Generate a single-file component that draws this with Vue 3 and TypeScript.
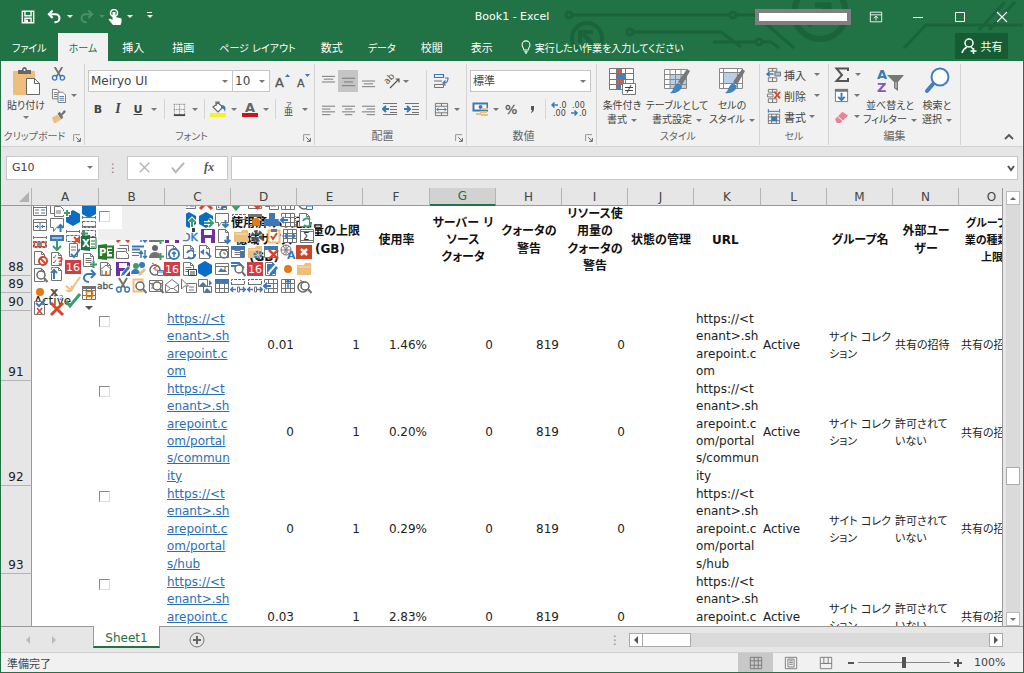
<script setup lang="ts">
import { ref } from 'vue'

interface Tab { label: string; active?: boolean; kana?: boolean }
interface Row { no: number; size: string; cells: Record<string, string>; box?: boolean }

const stroke = (d: string, c = '#737373', w = 1): string =>
  `<path d="${d}" fill="none" stroke="${c}" stroke-width="${w}"/>`
const fill = (d: string, c: string): string => `<path d="${d}" fill="${c}"/>`
const word = (t: string, x: number, y: number, size: number, c: string, extra = ''): string =>
  `<text x="${x}" y="${y}" font-size="${size}" fill="${c}" ${extra}>${t}</text>`

const gray = '#737373'
const blue = '#3b78b8'
const tan = '#ecc07c'
const red = '#d9442a'
const green = '#3f9b6c'

const doc = fill('M2.5 1.5h7l3 3v10h-10z', '#fff') + stroke('M2.5 1.5h7l3 3v10h-10zM9.500 1.500v3h3')
const sheetBox = fill('M1.500 2.500h13v11h-13z', '#fff') + stroke('M1.500 2.500h13v11h-13zM1.500 5.500h13')
const table = fill('M1.500 1.500h13v13h-13z', '#fff') + stroke('M1.500 1.500h13v13h-13zM1.500 5.500h13M1.500 10.500h13M5.500 1.500v13M10.500 1.500v13')
const lines = stroke('M4.500 6.500h6M4.500 8.500h6M4.500 10.500h6')
const lens = '<circle cx="9" cy="8" r="4" fill="#fff" stroke="#666" stroke-width="1.500"/>' + stroke('M12 11l3.500 4', gray, 2)
const cross = stroke('M9 9l6 6M15 9l-6 6', red, 2)
const cross2 = stroke('M2 2l12 12M14 2L2 14', red, 3)
const hex = fill('M8 0l7 4v8l-7 4-7-4V4z', '#0a6cc4')
const plus = stroke('M12.500 9v7M9 12.500h7', green, 2)
const upArrow = stroke('M11.500 15V8M8.500 11l3-3 3 3', blue, 2)
const downArrow = stroke('M11.500 8v7M8.500 12l3 3 3-3', blue, 2)
const pencil = fill('M7 12l6-7 2 2-6 7-3 1z', blue)
const folder = fill('M1 4h7l1-2h6v12H1z', tan) + stroke('M2 6h12', '#f8e2bd')
const refresh = stroke('M6 9a4 4 0 0 1 7-1M14 10a4 4 0 0 1-7 3', blue, 2)
const brush = fill('M24 2l3 2-8 14-4-3z', '#777') + fill('M15 16l4 3c-1 5-6 8-12 7 4-2 3-8 8-10z', '#3f86c0')
const comment = fill('M1.500 1.500h13v9h-7l-3 4v-4h-3z', '#fff') + stroke('M1.500 1.500h13v9h-7l-3 4v-4h-3z')
const save = fill('M1 1h13l1 1v13H1z', '#7030a0') + fill('M4 2h8v5H4zM5 10h6v5H5z', '#fff')
const dashed = stroke('M1.500 2v3M1.500 3.500h13M14.500 2v3', gray) + '<path d="M1.500 7.500h13v6h-13z" fill="none" stroke="#666" stroke-dasharray="3 1"/>'
const redSixteen = fill('M0 1h16v14H0z', '#cf3d45') + word('16', 1, 12, 11, '#fff')
const people = '<circle cx="7" cy="4" r="3" fill="#666"/>' + fill('M1 14c0-8 12-8 12 0z', gray)
const clock = '<circle cx="7" cy="9" r="5" fill="#fff" stroke="#666" stroke-width="1.500"/>' + stroke('M7 6v3h3M4 2l5 3-4 3', red)

const icons: Record<string, string> = {
  save: stroke('M1.500 1.500h13v13h-13zM4.500 1.500v5h7v-5M4.500 14.500v-5h7v5', '#fff', 1.600) + fill('M5 11h3v3H5z', '#fff'),
  undo: stroke('M6 1.500L2 5.500l4 4M2 5.500h7a4 4 0 0 1 0 8.500H8', '#fff', 2.200),
  redo: stroke('M10 1.500l4 4-4 4M14 5.500H7a4 4 0 0 0 0 8.500h1', '#4b9069', 2.200),
  touch: '<circle cx="7" cy="4" r="3.500" fill="none" stroke="#fff" stroke-width="1.500"/>' + fill('M5.500 3h3v5l6 1.500v4l-1 2.500H6L1.500 10.500l1.500-1 2.500 1.500z', '#fff'),
  ribbonopts: stroke('M1.500 2.500h13v11h-13zM1.500 5.500h13M8 12V7M5.500 9.500L8 7l2.500 2.500', '#fff'),
  min: stroke('M3 8.500h10', '#fff'),
  max: stroke('M3.500 3.500h9v9h-9z', '#fff'),
  close: stroke('M3 3l10 10M13 3L3 13', '#fff', 1.200),
  bulb: stroke('M5.500 11.500c0-3-2-3-2-6a4.500 4.500 0 0 1 9 0c0 3-2 3-2 6zM6 13.500h4M7 15h2', '#fff', 1.200),
  share: '<circle cx="8" cy="5" r="4" fill="none" stroke="#fff" stroke-width="1.500"/>' + stroke('M1 15c1-4 3-5 5-6M10 9l2 2M12.500 10v6M9.500 13h6', '#fff', 1.500),
  cut: stroke('M4 0l6 10M12 0L6 10', gray, 2) + stroke('M6 10a2.500 2.500 0 1 0 0 3zM10 10a2.500 2.500 0 1 1 0 3z', blue, 1.500),
  copy: fill('M1.500 1.500h6v10h-6z', '#fff') + stroke('M1.500 1.500h5l2 2v8h-7zM3 5h4M3 7h4M3 9h4') + fill('M7.500 4.500h5l3 3v8h-8z', '#fff') + stroke('M7.500 4.500h5l3 3v8h-8z') + stroke('M9 9h5M9 11h5M9 13h5', blue),
  painter: fill('M1 9l6-3 4 5-6 4H3z', tan) + fill('M7 5l2-2 2 2 3-4 2 2-4 4 1 2-2 2z', gray),
  growA: word('A', 0, 14, 13, '#555', 'stroke="#555" stroke-width=".300"') + fill('M10 4l2.500-3L15 4z', blue),
  shrinkA: word('A', 2, 14, 11, '#555', 'stroke="#555" stroke-width=".300"') + fill('M10 1h5l-2.500 3z', blue),
  border: '<path d="M2.500 2v11M2 2.500h12M13.500 2v11M8 2v11M2 8h12" fill="none" stroke="#777" stroke-dasharray="1 1"/>' + stroke('M2 14h12', '#444', 2),
  bucket: fill('M3 6l5-4 5 4-5 5z', '#fff') + stroke('M3 6l5-4 5 4-5 5zM6 5V1h3v3', '#666', 1.200) + fill('M11 4c5 0 5 3 4 7-1-3-2-4-4-4z', blue) + fill('M0 12h16v4H0z', '#f8f125'),
  fontcolor: word('A', 3, 11, 13, '#666', 'font-weight="bold"') + fill('M0 12h16v4H0z', '#c8161d'),
  ruby: word('ア', 5, 6, 6, '#444') + word('亜', 3, 14, 9, '#444'),
  top: stroke('M1 2.500h14M3 5.500h10M1 8.500h14'),
  mid: stroke('M1 4.500h14M3 8.500h10M1 12.500h14'),
  bottom: stroke('M1 7.500h14M3 10.500h10M1 13.500h14'),
  left: stroke('M1 4.500h14M1 7.500h9M1 10.500h14M1 13.500h9'),
  center: stroke('M1 4.500h14M4 7.500h8M1 10.500h14M4 13.500h8'),
  right: stroke('M1 4.500h14M6 7.500h9M1 10.500h14M6 13.500h9'),
  orient: '<g transform="rotate(-45 6 6)">' + word('ab', 0, 8, 9, '#555') + '</g>' + stroke('M6 15l9-9M11.500 6H15v3.500', '#555', 1.200),
  outdent: stroke('M1 2.500h14M8 5.500h7M8 8.500h7M8 11.500h7M1 13.500h14') + stroke('M7 8H1M4 5L1 8l3 3', blue, 2),
  indent: stroke('M1 2.500h14M8 5.500h7M8 8.500h7M8 11.500h7M1 13.500h14') + stroke('M0 8h6M3 5l3 3-3 3', blue, 2),
  wrap: stroke('M1.500 1.500h9v3h-9zM1.500 11.500h9v3h-9zM1 8h8') + stroke('M1.500 1.500h9v3h-9zM12 5h3c0 4-1 5-4 5M12.500 7.500L10 10l2.500 2.500', blue, 1.200),
  merge: stroke('M1.500 1.500h13v13h-13zM1.500 4.500h13M1.500 11.500h13M8 1.500v3M8 11.500v3') + stroke('M3 8h10M5 6L3 8l2 2M11 6l2 2-2 2', blue),
  money: fill('M1 2h15v7H1z', '#fff') + stroke('M1.500 2.500h14v7h-14z', blue, 2) + '<circle cx="8.500" cy="6" r="2" fill="#3b78b8"/>' + fill('M9 7h7v2H9zM8 10h7v2H8zM4 12h5v2H4zM9 13h7v2H9z', tan),
  percent: word('%', 1, 13, 13, '#555', 'stroke="#555" stroke-width=".300"'),
  comma: fill('M7 5h3v3c0 2-1 3-3 4v-1c1-.500 1-1 1-2H7z', '#555'),
  decplus: stroke('M7 4H1M3.500 1.500L1 4l2.500 2.500', blue, 1.500) + word('.0', 8, 7, 8, '#444') + word('.00', 2, 15, 8, '#444'),
  decminus: word('.00', 1, 7, 8, '#444') + word('.0', 8, 15, 8, '#444') + stroke('M0 12h6M3.500 9.500L6 12l-2.500 2.500', blue, 1.500),
  insert: stroke('M2.500 1.500h9v3h-9zM7 1.500v3M2.500 11.500h9v4h-9zM7 11.500v4') + fill('M9 5h7v5H9z', '#a9c4df') + stroke('M9.500 5.500h6v4h-6z', gray) + stroke('M8 7.500H1M4 5L1 7.500 4 10', blue, 1.500),
  remove: stroke('M2.500 1.500h9v3h-9zM7 1.500v3M2.500 11.500h9v4h-9zM7 11.500v4M1.500 6.500h6v3h-6z') + stroke('M9 4l6 7M15 4l-6 7', red, 2),
  format: stroke('M2.500 5.500h12v10h-12zM2.500 8.500h12M2.500 12.500h12M6 5.500v10M11 5.500v10') + fill('M6 8h6v5H6z', blue) + stroke('M2 2.500h12M2.500 0v4M14.500 0v4', blue),
  sigma: stroke('M14 4V1.500H2.500L8 8l-5.500 6H14v-3', '#555', 2),
  fillDown: fill('M1.500 1.500h13v13h-13z', '#fff') + stroke('M1.500 1.500h13v13h-13z') + fill('M1 1h14v3H1z', '#777') + stroke('M8 5v8M4.500 9.500L8 13l3.500-3.500', blue, 2),
  eraser: fill('M1 11l8-8 6 4-8 8H3z', '#e8849a') + stroke('M4 8l6 5', '#fff'),
  fx: word('fx', 1, 12, 13, '#555', 'font-family="Liberation Serif, serif" font-style="italic" font-weight="bold"'),
  cancel: stroke('M3 3l10 10M13 3L3 13', '#b5b5b5', 1.500),
  check: stroke('M2 8l4 5 9-10', '#b5b5b5', 2),
  launcher: stroke('M5 3.500H3.500V12M5 3.500h7', '#777') + stroke('M7 7l5 5M12.500 8v4.500H8', '#555', 1.200),
  caret: stroke('M4 10l4-4 4 4', '#555', 1.800),
  normal: stroke('M1.500 1.500h13v13h-13zM1.500 5.500h13M1.500 10.500h13M6 1.500v13M10.500 1.500v13'),
  pageview: stroke('M1.500 1.500h13v13h-13zM4.500 3.500h7v9h-7zM6 5.500h4M6 7.500h4M6 9.500h4'),
  breakview: stroke('M1.500 1.500h13v13h-13zM5.500 1.500v7h5v-7M1.500 8.500h13', gray),
  add: '<circle cx="8" cy="8" r="7" fill="none" stroke="#777"/>' + stroke('M8 4v8M4 8h8', '#666', 2),

  form: sheetBox + stroke('M3 8h4M3 11h4') + stroke('M9 8h4M9 11h4', blue),
  docs: stroke('M1.500 1.500h7v10h-7z') + fill('M5.500 4.500h9v10h-9z', '#fff') + stroke('M5.500 4.500h6l3 3v7h-9zM7 9h5M7 11h5'),
  split: sheetBox + stroke('M8 5v9') + stroke('M3 9.500h4M9 9.500h4M5.500 8v3M10.500 8v3', blue),
  boxred: dashed + stroke('M2.500 8.500h11v4h-11z', red) + fill('M5 8h5v4H5z', '#7a8ca0'),
  docno: doc + '<circle cx="11" cy="11" r="4" fill="#fff" stroke="#d9442a" stroke-width="2"/>' + stroke('M8 8l6 6', red, 2),
  docfind: doc + lens,
  dot: '<circle cx="8" cy="8" r="4" fill="#e27b10"/>',
  docx: doc + stroke('M5 8l5 6M10 8l-5 6', red, 1.500) + stroke('M4 3l3 3 6-6', blue, 2),
  commentup: comment + upArrow,
  commentdown: comment + downArrow,
  bar: fill('M1 5h14v6H1z', blue) + stroke('M3 8h10', '#fff'),
  greendown: stroke('M8 1v11M4 8l4 4 4-4', green, 2),
  checklist: doc + stroke('M4 6l1 1 2-3M4 11l1 1 2-3', gray) + word('?', 8, 14, 11, red, 'font-weight="bold"'),
  docup: doc + stroke('M5 13V4M2 7l3-3 3 3', '#fff', 4) + stroke('M5 13V4M2 7l3-3 3 3', blue, 2),
  docdown: doc + downArrow,
  xtwo: word('x', 1, 11, 13, '#555', 'font-weight="bold"') + word('2', 10, 15, 7, blue),
  bigx: cross2,
  hexplus: hex + stroke('M2 0v7M-2 3h8', '#fff', 4) + stroke('M2 0v6M-1 3h6', green, 2),
  hex,
  hexarrow: hex + stroke('M6 11h9M11 7l4 4-4 4', '#fff', 4) + stroke('M6 11h9M11 7l4 4-4 4', green, 2),
  hexup: hex + stroke('M11 15V7M8 10l3-3 3 3', '#fff', 4) + stroke('M11 15V7M8 10l3-3 3 3', green, 2),
  dashx: dashed + cross,
  dashed,
  dashplus: dashed + stroke('M3 7v7M0 10.500h7', green, 2),
  server: fill('M4.500 1.500h8v13h-8z', '#fff') + stroke('M4.500 1.500h8v13h-8zM6 5h5M6 8h5') + stroke('M6 12l3 3 6-8', blue, 2),
  sixteen: redSixteen,
  gold: stroke('M1 10l5 4L15 1M1 14c5 3 8-1 5-4', tan, 2),
  okgreen: stroke('M1 9l4 5L15 2', green, 3),
  excel: fill('M0 1l9-1v16l-9-1z', '#1e7145') + fill('M9 2h6v12H9z', '#fff') + stroke('M9 2.500h6v11H9M10 6h4M10 9h4M10 12h4', '#1e7145') + word('X', 1, 12, 10, '#fff', 'font-weight="bold"'),
  project: fill('M0 1l9-1v16l-9-1z', '#2a7a2a') + fill('M9 2h6v12H9z', '#fff') + stroke('M9 2.500h6v11H9M10 6h4M11 9h3', '#2a7a2a', 2) + word('P', 1, 12, 10, '#fff', 'font-weight="bold"'),
  docplus: doc + lines + plus,
  redoBlue: stroke('M10 2l4 4-4 4M14 6H7a4 4 0 0 0-4 4c0 2 2 4 5 4', blue, 2),
  calendar: table + fill('M1 1h14v3H1z', gray) + stroke('M5.500 6.500h6v5h-6z', '#e27b10', 1.500),
  down: fill('M4 6h8l-4 4z', '#555'),
  stack: stroke('M4.500 1.500h9v6M2.500 4.500h9v6') + fill('M1.500 7.500h12v7h-12z', '#fff') + stroke('M1.500 7.500h9l3 3v4h-12z'),
  sort: stroke('M1 2.500h12M1 5.500h8', blue, 2) + stroke('M1 8.500h7M1 11.500h7') + stroke('M10 14V8M8 10l2-3 2 3M14 6v8M12 12l2 2 2-2', blue, 1.500),
  userplus: people + plus,
  users: '<circle cx="5" cy="5" r="3" fill="#3f9b6c"/><circle cx="11" cy="4" r="3" fill="#3b78b8"/>' + fill('M0 13c0-7 9-6 9 0z', blue) + stroke('M8 14l6-6', tan, 3),
  docblueup: doc + '<circle cx="10" cy="10" r="5" fill="#fff" stroke="#3b78b8" stroke-width="2"/>' + stroke('M10 13V8M8 10l2-2 2 2', blue, 1.500),
  docrefresh: doc + refresh,
  greenrefresh: doc + stroke('M6 9a4 4 0 0 1 7-1M14 10a4 4 0 0 1-7 3', green, 2),
  docpart: doc + fill('M3 8l4-3v6z', blue) + stroke('M9 8l5 5', blue, 2),
  winclock: sheetBox + '<circle cx="10" cy="10" r="4" fill="#fff" stroke="#666" stroke-width="1.500"/>' + stroke('M10 8v2h2'),
  winblue: sheetBox + fill('M1 2h14v3H1zM10 7h4v6h-4z', blue) + lines,
  folder,
  foldergear: folder + '<circle cx="11" cy="11" r="3" fill="none" stroke="#3b78b8" stroke-width="3" stroke-dasharray="2 1"/>',
  winx: sheetBox + fill('M1 2h14v3H1z', blue) + stroke('M6 6l9 9M15 6l-9 9', red, 2.500),
  globe: '<circle cx="6" cy="6" r="5" fill="none" stroke="#777"/>' + stroke('M1 6h10M6 1v10M3 2c3 3 3 5 0 8M9 2c-3 3-3 5 0 8', '#777') + word('A', 7, 15, 11, blue, 'font-weight="bold"'),
  redbox: fill('M0 1h16v14H0z', '#ce4427') + stroke('M5 5l6 6M11 5l-6 6', '#fff', 2.500),
  home: doc + stroke('M2 9l6-5 6 5M4 9v5h8V9') + fill('M7 10h2v4H7z', '#e27b10'),
  savepencil: save + stroke('M8 14l7-8', '#fff', 5) + pencil,
  purple: save,
  clock: clock + fill('M9 9h7v6H9z', '#fff') + stroke('M9.500 9.500h6v5h-6zM9 11h6', blue),
  doclist: doc + lines + fill('M7 8h9v7H7z', '#fff') + stroke('M7.500 8.500h8v6h-8zM9 11h5M9 13h5', '#345'),
  picture: sheetBox + fill('M4 11l3-4 2 2 2-1 2 3z', blue) + '<circle cx="11" cy="7" r="1" fill="#e27b10"/>',
  bluefind: stroke('M1 2h8l5 5M1 5h6', blue, 2) + lens,
  docpencil: doc + fill('M4 3h8v10H4z', blue) + stroke('M6 13l8-9', '#fff', 4) + pencil,
  abc: word('abc', -1, 11, 9, '#555', 'stroke="#555" stroke-width=".300"'),
  tanfind: stroke('M2.500 1.500h9v12h-9z', tan, 2) + lens,
  tablefind: sheetBox + stroke('M3 7h4M3 10h3') + lens,
  mail: fill('M1.500 6.500l6.500-5 6.500 5v8h-13z', '#fff') + stroke('M1.500 6.500l6.500-5 6.500 5v8h-13zM1.500 6.500l5 4h3l5-4M1.500 14.500l5-4M14.500 14.500l-5-4'),
  cursor: fill('M5.500 5.500h10v9h-10z', '#fff') + stroke('M5.500 5.500h10v9h-10zM8 9h5M8 12h5') + fill('M0 0l8 8H4l-3 3z', '#fff') + stroke('M.500 1l7 7h-4l-3 3z'),
  swap: fill('M1 1h9v8H1zM6 8h9v7H6z', '#fff') + stroke('M1.500 1.500h9v7h-9zM6.500 8.500h8v6h-8z') + fill('M2 8l4-4 4 4zM7 14l3-4 4 4zM12 2l3 3-3 3z', blue),
  tableblue: table + fill('M1 1h14v4H1z', blue),
  arrows: '<path d="M1.500 7V1.500h13V7" fill="#fff" stroke="#666" stroke-dasharray="3 1"/>' + stroke('M1.500 6.500h13') + stroke('M0 11.500h6M3 9l-2 2.500L3 14M10 11.500h6M13 9l2 2.500L13 14', blue, 1.500) + stroke('M7.500 9v5h2V9z'),
  tableleft: table + stroke('M8 8H1M4 5L1 8l3 3', '#fff', 4) + stroke('M8 8H1M4 5L1 8l3 3', blue, 2),
  tableup: table + stroke('M8 10V2M5.500 4.500L8 2l2.500 2.500', blue, 1.500),
  tablewide: table + stroke('M3 8h10M5 6L3 8l2 2M11 6l2 2-2 2', blue, 1.500),
  clockfind: clock + lens,
  dk: word('DK', -1, 13, 11, blue, 'stroke="#3b78b8" stroke-width=".400"') + fill('M9 0h3v4H9z', '#345'),
  gear: '<circle cx="8" cy="8" r="4" fill="none" stroke="#555" stroke-width="4" stroke-dasharray="3 1"/>',
  clip: fill('M2 2h12v13H2z', '#fff') + stroke('M2.500 2.500h11v12h-11z', tan, 2) + fill('M5 1h6v3H5z', gray) + stroke('M5 8l2 3 4-6', red, 2),
  total: fill('M0 0h16v16H0z', '#fff') + stroke('M1.500 1.500h13v13h-13zM1 3.500h14M1 12.500h14') + word('Σ', 4, 12, 10, '#333'),
  winorange: stroke('M1.500 2.500h13v11h-13z') + fill('M1 2h14v3H1z', gray) + '<circle cx="9" cy="10" r="4" fill="#e27b10"/>',
  puzzle: fill('M5 1h6v6h5v7H0V7h5z', blue),
  shield: sheetBox + fill('M6 4h9v6l-4.500 5L6 10z', '#d9442a'),
  openframe: '<path d="M1.500 8V2.500h13V8" fill="none" stroke="#666" stroke-dasharray="3 1"/>' + stroke('M1.500 7.500h13'),
}

const tabs: Tab[] = [
  { label: 'ファイル', kana: true }, { label: 'ホーム', kana: true, active: true }, { label: '挿入' }, { label: '描画' },
  { label: 'ページ レイアウト', kana: true }, { label: '数式' }, { label: 'データ', kana: true }, { label: '校閲' }, { label: '表示' },
]

/* Pasted pictures: name, left and top inside the sheet */
const column = (x: number, items: [string, number][]): [string, number, number][] =>
  items.map(([name, y]) => [name, x, y])
const line = (y: number, x: number, names: string[]): [string, number, number][] =>
  names.map((name, i) => [name, x + Math.round(i * 16.5), y])

const pictures: [string, number, number][] = [
  ...column(0, [['form', -4], ['split', 11], ['boxred', 28], ['docno', 44], ['docfind', 61], ['dot', 78], ['docx', 94]]),
  ...column(17, [['docs', -4], ['commentup', 11], ['bar', 24], ['greendown', 32], ['checklist', 45], ['docup', 60], ['xtwo', 79], ['bigx', 95]]),
  ...column(33, [['hexplus', 4], ['dashx', 22], ['server', 36], ['sixteen', 53], ['gold', 70], ['okgreen', 86]]),
  ...column(49, [['hex', -4], ['dashed', 8], ['dashplus', 17], ['excel', 29], ['docplus', 46], ['redoBlue', 62], ['calendar', 79], ['down', 94]]),
  ...line(22, 66, ['bar', 'bigx', 'sort', 'userplus', 'purple']),
  ...line(38, 66, ['project', 'stack', 'sort', 'userplus', 'docblueup', 'docrefresh', 'docpart', 'winclock', 'winblue', 'foldergear', 'winx', 'globe', 'redbox']),
  ...line(55, 66, ['home', 'savepencil', 'users', 'clock', 'sixteen', 'doclist', 'hex', 'picture', 'bluefind', 'sixteen', 'docpencil', 'dot', 'folder']),
  ...line(72, 66, ['abc', 'cut', 'tanfind', 'tablefind', 'mail', 'cursor', 'swap', 'tableblue', 'arrows', 'arrows', 'tableleft', 'tableup', 'clockfind']),
  ...line(-11, 149, ['form', 'bigx', 'docpencil', 'okgreen', 'shield', 'docs', 'tableup', 'clock']),
  ...line(6, 149, ['hexup', 'hexarrow', 'commentdown', 'openframe', 'winorange', 'puzzle', 'tableleft', 'greenrefresh']),
  ...line(22, 151, ['dk', 'purple', 'docdown', 'folder', 'gear', 'clip', 'tablewide', 'total']),
]

const letters = 'ABCDEFGHIJKLMNO'.split('')
const site = (tail: string): string => 'https://<t\nenant>.sh\narepoint.c\nom' + tail
const record = (no: number, size: string, tail: string, used: string, rate: string, outside: string): Row => ({
  no, size, box: true,
  cells: {
    C: site(tail), D: used, E: '1', F: rate, G: '0', H: '819', I: '0', K: site(tail),
    L: 'Active', M: 'サイト コレク\nション', N: outside, O: '共有の招待',
  },
})
const rows: Row[] = [
  {
    no: 88, size: 'r-head', cells: {
      D: '使用済みの記\n憶域サイズ\n(GB)', E: '容量の上限\n(GB)', F: '使用率', G: 'サーバー リ\nソース\nクォータ',
      H: 'クォータの\n警告', I: 'リソース使\n用量の\nクォータの\n警告', J: '状態の管理', K: 'URL',
      M: 'グループ名', N: '外部ユー\nザー', O: 'グループ作\n業の種類の\n上限',
    },
  },
  { no: 89, size: 'r-thin', cells: {} },
  { no: 90, size: 'r-one', cells: { A: 'Active' } },
  record(91, 'r-four', '', '0.01', '1.46%', '共有の招待'),
  record(92, 'r-six', '/portal\ns/commun\nity', '0', '0.20%', '許可されて\nいない'),
  record(93, 'r-five', '/portal\ns/hub', '0', '0.29%', '許可されて\nいない'),
  record(94, 'r-five', '/portal\ns/search', '0.03', '2.83%', '許可されて\nいない'),
]

const font = ref('Meiryo UI')
const fontSize = ref('10')
const numberFormat = ref('標準')
const cellName = ref('G10')
const formula = ref('')
const zoom = ref(100)
</script>

<template>
  <div class="window">
    <header class="top">
      <svg class="circuit" width="470" height="50" viewBox="0 0 470 50" fill="none" stroke="#1b633b" stroke-width="3" aria-hidden="true">
        <circle cx="16" cy="15" r="3" /><path d="M20 15h156M184 15h20" /><circle cx="180" cy="15" r="3" />
        <circle cx="34" cy="38" r="15" stroke-width="4" /><path d="M42 46L29 33M27 43V32h13" stroke-width="4" />
        <circle cx="77" cy="32" r="3" /><path d="M81 32h87l20 15M160 42h42M210 42h8l8 6" /><circle cx="206" cy="42" r="3" />
        <path d="M211 22l30 26M351 48l22-23h97M426 30l26-28M436 30l26-28" />
        <circle cx="267" cy="13" r="26" stroke-width="6" /><path d="M255 26l18-18M262 5h14v14" stroke-width="5" />
      </svg>
      <div class="title-row">
        <div class="quick">
          <button class="q-save" aria-label="上書き保存"><svg class="ic14" viewBox="0 0 16 16" v-html="icons.save" /></button>
          <button class="q-undo" aria-label="元に戻す"><svg class="ic15" viewBox="0 0 16 16" v-html="icons.undo" /><i class="arr light" /></button>
          <button class="q-undo" aria-label="やり直し"><svg class="ic15" viewBox="0 0 16 16" v-html="icons.redo" /><i class="arr faint" /></button>
          <button class="q-touch" aria-label="タッチ"><svg class="ic16" viewBox="0 0 16 16" v-html="icons.touch" /><i class="arr light" /></button>
          <button class="q-more" aria-label="カスタマイズ"><i class="arr light lined" /></button>
        </div>
        <h1>Book1 - Excel</h1>
        <div class="win-controls">
          <span class="account" />
          <button aria-label="リボンの表示"><svg class="ic14" viewBox="0 0 16 16" v-html="icons.ribbonopts" /></button>
          <button aria-label="最小化"><svg class="ic16" viewBox="0 0 16 16" v-html="icons.min" /></button>
          <button aria-label="最大化"><svg class="ic16" viewBox="0 0 16 16" v-html="icons.max" /></button>
          <button aria-label="閉じる"><svg class="ic16" viewBox="0 0 16 16" v-html="icons.close" /></button>
        </div>
      </div>
      <nav class="tabs">
        <button v-for="t in tabs" :key="t.label" class="tab" :class="{ on: t.active, narrow: t.kana }">{{ t.label }}</button>
        <button class="tell"><svg class="ic14" viewBox="0 0 16 16" v-html="icons.bulb" />実行したい作業を入力してください</button>
        <button class="share"><svg class="ic16" viewBox="0 0 16 16" v-html="icons.share" />共有</button>
      </nav>
    </header>

    <section class="ribbon">
      <div class="group g-clip">
        <div class="body">
          <button class="big w50">
            <svg class="ic28" viewBox="0 0 28 28">
              <path d="M1 4h22v24H1z" fill="#ecc07c" /><path d="M6 3h4c0-4 5-4 5 0h4v4H6z" fill="#666" /><circle cx="12.500" cy="3" r="1" fill="#fff" />
              <path d="M14.500 11.500h8l5 5v11h-13z" fill="#fff" stroke="#666" /><path d="M22.500 11.500v5h5" fill="none" stroke="#666" />
            </svg>
            <span>貼り付け</span><i class="arr" />
          </button>
          <div class="stack">
            <button aria-label="切り取り"><svg class="ic15" viewBox="0 0 16 16" v-html="icons.cut" /></button>
            <button aria-label="コピー"><svg class="ic15" viewBox="0 0 16 16" v-html="icons.copy" /><i class="arr push" /></button>
            <button aria-label="書式のコピー"><svg class="ic15" viewBox="0 0 16 16" v-html="icons.painter" /></button>
          </div>
        </div>
        <footer>クリップボード<button class="launch" aria-label="クリップボードの詳細"><svg class="ic12" viewBox="0 0 16 16" v-html="icons.launcher" /></button></footer>
      </div>

      <div class="group g-font">
        <div class="rows">
          <div class="row">
            <span class="combo c-font"><select v-model="font" aria-label="フォント"><option>Meiryo UI</option></select><i class="arr" /></span>
            <span class="combo c-size"><select v-model="fontSize" aria-label="フォント サイズ"><option>10</option></select><i class="arr" /></span>
            <button class="w20" aria-label="拡大"><svg class="ic16" viewBox="0 0 16 16" v-html="icons.growA" /></button>
            <button class="w20" aria-label="縮小"><svg class="ic16" viewBox="0 0 16 16" v-html="icons.shrinkA" /></button>
          </div>
          <div class="row">
            <button class="w20 letter bold">B</button><button class="w20 letter ital">I</button><button class="w20 letter under">U</button>
            <button class="w12" aria-label="下線の種類"><i class="arr" /></button><i class="sep" />
            <button class="w20" aria-label="罫線"><svg class="ic15" viewBox="0 0 16 16" v-html="icons.border" /></button>
            <button class="w12" aria-label="罫線の種類"><i class="arr" /></button><i class="sep slim" />
            <button class="w20" aria-label="塗りつぶし"><svg class="ic16" viewBox="0 0 16 16" v-html="icons.bucket" /></button>
            <button class="w12" aria-label="塗りつぶしの色"><i class="arr" /></button>
            <button class="w20" aria-label="フォントの色"><svg class="ic16" viewBox="0 0 16 16" v-html="icons.fontcolor" /></button>
            <button class="w12" aria-label="色の選択"><i class="arr" /></button><i class="sep slim" />
            <button class="w20" aria-label="ふりがな"><svg class="ic16" viewBox="0 0 16 16" v-html="icons.ruby" /></button>
            <button class="w12" aria-label="ふりがなの設定"><i class="arr" /></button>
          </div>
        </div>
        <footer>フォント<button class="launch" aria-label="フォントの詳細"><svg class="ic12" viewBox="0 0 16 16" v-html="icons.launcher" /></button></footer>
      </div>

      <div class="group g-align">
        <div class="split">
          <div class="rows">
            <div class="row">
              <button class="w20" aria-label="上揃え"><svg class="ic15" viewBox="0 0 16 16" v-html="icons.top" /></button>
              <button class="w20 pressed" aria-label="上下中央揃え"><svg class="ic15" viewBox="0 0 16 16" v-html="icons.mid" /></button>
              <button class="w20" aria-label="下揃え"><svg class="ic15" viewBox="0 0 16 16" v-html="icons.bottom" /></button>
              <button class="orient" aria-label="方向"><svg class="ic16" viewBox="0 0 16 16" v-html="icons.orient" /><i class="arr" /></button>
            </div>
            <div class="row">
              <button class="w20" aria-label="左揃え"><svg class="ic15" viewBox="0 0 16 16" v-html="icons.left" /></button>
              <button class="w20" aria-label="中央揃え"><svg class="ic15" viewBox="0 0 16 16" v-html="icons.center" /></button>
              <button class="w20" aria-label="右揃え"><svg class="ic15" viewBox="0 0 16 16" v-html="icons.right" /></button>
              <button class="w24" aria-label="インデントを減らす"><svg class="ic16" viewBox="0 0 16 16" v-html="icons.outdent" /></button>
              <button class="w20" aria-label="インデントを増やす"><svg class="ic16" viewBox="0 0 16 16" v-html="icons.indent" /></button>
            </div>
          </div>
          <i class="tall" />
          <div class="rows wrapcol">
            <div class="row"><button class="w20" aria-label="折り返し"><svg class="ic16" viewBox="0 0 16 16" v-html="icons.wrap" /></button></div>
            <div class="row"><button class="w20" aria-label="セルを結合"><svg class="ic15" viewBox="0 0 16 16" v-html="icons.merge" /></button><button class="w12" aria-label="結合の種類"><i class="arr" /></button></div>
          </div>
        </div>
        <footer class="kanji">配置<button class="launch" aria-label="配置の詳細"><svg class="ic12" viewBox="0 0 16 16" v-html="icons.launcher" /></button></footer>
      </div>

      <div class="group g-num">
        <div class="rows">
          <div class="row">
            <span class="combo c-num"><select v-model="numberFormat" aria-label="数値の書式"><option>標準</option></select><i class="arr" /></span>
          </div>
          <div class="row">
            <button class="w20" aria-label="通貨"><svg class="ic16" viewBox="0 0 16 16" v-html="icons.money" /></button>
            <button class="w12" aria-label="通貨の種類"><i class="arr" /></button>
            <button class="w20" aria-label="パーセント"><svg class="ic16" viewBox="0 0 16 16" v-html="icons.percent" /></button>
            <button class="w20" aria-label="桁区切り"><svg class="ic16" viewBox="0 0 16 16" v-html="icons.comma" /></button><i class="sep slim" />
            <button class="w20" aria-label="小数点以下を増やす"><svg class="ic16" viewBox="0 0 16 16" v-html="icons.decplus" /></button>
            <button class="w20" aria-label="小数点以下を減らす"><svg class="ic16" viewBox="0 0 16 16" v-html="icons.decminus" /></button>
          </div>
        </div>
        <footer class="kanji">数値<button class="launch" aria-label="数値の詳細"><svg class="ic12" viewBox="0 0 16 16" v-html="icons.launcher" /></button></footer>
      </div>

      <div class="group g-style">
        <div class="body">
          <button class="big w50">
            <svg class="ic28" viewBox="0 0 28 28">
              <path d="M1.500 1.500h24v21h-24zM1.500 6.500h24M1.500 12.500h24M1.500 17.500h24M8.500 1.500v21M17.500 1.500v21" fill="#fff" stroke="#777" />
              <path d="M9 2h5v4H9zM9 13h7v4H9z" fill="#cf5c43" /><path d="M9 7h9v5H9zM9 18h4v4H9z" fill="#4a7fb8" />
              <path d="M14.500 16.500h13v11h-13z" fill="#fff" stroke="#777" /><path d="M17 20.500h8M17 23.500h8M23 18l-4 8" stroke="#444" fill="none" />
            </svg>
            <span>条件付き</span><span>書式<i class="arr" /></span>
          </button>
          <button class="big w60">
            <svg class="ic28" viewBox="0 0 28 28">
              <path d="M1.500 2.500h22v19h-22z" fill="#fff" /><path d="M7 7h16v14H7z" fill="#b8cfe6" />
              <path d="M1.500 2.500h22v19h-22zM1.500 7.500h22M1.500 12.500h22M1.500 17.500h22M7 2.500v19M12.500 2.500v19M18 2.500v19" fill="none" stroke="#888" />
              <g v-html="brush" />
            </svg>
            <span>テーブルとして</span><span>書式設定<i class="arr" /></span>
          </button>
          <button class="big w50">
            <svg class="ic28" viewBox="0 0 28 28">
              <path d="M1.500 1.500h23v20h-23z" fill="#fff" /><path d="M6 6h14v11H6z" fill="#b8cfe6" />
              <path d="M1.500 1.500h23v20h-23zM1.500 5.500h23M1.500 16.500h23M5.500 1.500v20M19.500 1.500v20" fill="none" stroke="#888" />
              <g v-html="brush" />
            </svg>
            <span>セルの</span><span>スタイル<i class="arr" /></span>
          </button>
        </div>
        <footer>スタイル</footer>
      </div>

      <div class="group g-cell">
        <div class="stack text">
          <button><svg class="ic15" viewBox="0 0 16 16" v-html="icons.insert" /><span>挿入</span><i class="arr" /></button>
          <button><svg class="ic15" viewBox="0 0 16 16" v-html="icons.remove" /><span>削除</span><i class="arr" /></button>
          <button class="near"><svg class="ic15" viewBox="0 0 16 16" v-html="icons.format" /><span>書式</span><i class="arr" /></button>
        </div>
        <footer>セル</footer>
      </div>

      <div class="group g-edit">
        <div class="body">
          <div class="stack">
            <button aria-label="合計"><svg class="ic16" viewBox="0 0 16 16" v-html="icons.sigma" /><i class="arr push" /></button>
            <button aria-label="フィル"><svg class="ic15" viewBox="0 0 16 16" v-html="icons.fillDown" /><i class="arr push" /></button>
            <button aria-label="クリア"><svg class="ic15" viewBox="0 0 16 16" v-html="icons.eraser" /><i class="arr push" /></button>
          </div>
          <button class="big w50">
            <svg class="ic28" viewBox="0 0 28 28">
              <text x="1" y="12" font-size="13" font-weight="bold" fill="#3b78b8">A</text>
              <text x="1" y="25" font-size="13" font-weight="bold" fill="#8a55b5">Z</text>
              <path d="M11 8h17l-6 7v9l-4-3v-6z" fill="#777" /><path d="M20 15v6" stroke="#ddd" />
            </svg>
            <span>並べ替えと</span><span>フィルター<i class="arr" /></span>
          </button>
          <button class="big w44">
            <svg class="ic28" viewBox="0 0 28 28">
              <circle cx="17" cy="10" r="8.500" fill="#fff" stroke="#3f7fbf" stroke-width="2" /><path d="M10 17l-6 7" stroke="#3f7fbf" stroke-width="4" stroke-linecap="round" />
            </svg>
            <span>検索と</span><span>選択<i class="arr" /></span>
          </button>
        </div>
        <footer class="kanji">編集</footer>
      </div>
      <button class="collapse" aria-label="リボンを折りたたむ"><svg class="ic16" viewBox="0 0 16 16" v-html="icons.caret" /></button>
    </section>

    <section class="formula">
      <span class="namebox"><input v-model="cellName" aria-label="名前ボックス" /><i class="arr" /></span>
      <span class="dots">⋮</span>
      <div class="fbuttons">
        <button aria-label="キャンセル"><svg class="ic15" viewBox="0 0 16 16" v-html="icons.cancel" /></button>
        <button aria-label="入力"><svg class="ic15" viewBox="0 0 16 16" v-html="icons.check" /></button>
        <button aria-label="関数の挿入"><svg class="ic15" viewBox="0 0 16 16" v-html="icons.fx" /></button>
      </div>
      <span class="fxbox"><input v-model="formula" aria-label="数式バー" />
        <svg class="ic12" viewBox="0 0 12 12"><path d="M3 4l3 4 3-4" fill="none" stroke="#555" stroke-width="2" /></svg></span>
    </section>

    <main class="work">
      <div class="sheet">
        <table>
          <colgroup><col class="c-no" /><col v-for="(l, i) in letters" :key="l" :class="i % 5 === 0 ? 'c-wide' : 'c-std'" /></colgroup>
          <thead>
            <tr><th class="corner"><svg width="10" height="10" viewBox="0 0 10 10"><path d="M10 0v10H0z" fill="#b2b2b2" /></svg></th>
              <th v-for="l in letters" :key="l" scope="col" :class="{ sel: l === 'G' }">{{ l }}</th></tr>
          </thead>
          <tbody>
            <tr v-for="r in rows" :key="r.no" :class="r.size">
              <th scope="row">{{ r.no }}</th>
              <td v-for="l in letters" :key="l" :class="'col-' + l">
                <input v-if="l === 'B' && r.box" type="checkbox" :aria-label="`${r.no} 行を選択`" />
                <a v-else-if="l === 'C' && r.cells.C" href="#">{{ r.cells.C }}</a>
                <template v-else>{{ r.cells[l] }}</template>
              </td>
            </tr>
          </tbody>
        </table>
        <div class="pasted">
          <svg width="290" height="114" viewBox="0 0 290 114" aria-hidden="true">
            <g v-for="(p, i) in pictures" :key="i" :transform="`translate(${p[1]} ${p[2]})`" v-html="icons[p[0]]" />
            <path d="M66 0h88v34H66z" fill="#efefef" /><path d="M66 0h24v23H66z" fill="#fff" />
          </svg>
          <input type="checkbox" aria-label="すべて選択" />
        </div>
      </div>
      <div class="vscroll">
        <button aria-label="上へ"><i class="arr up" /></button><div class="vtrack"><span class="vthumb" /></div><button aria-label="下へ"><i class="arr" /></button>
      </div>
    </main>

    <section class="sheetbar">
      <button class="nav" aria-label="前のシート"><i class="tri back" /></button>
      <button class="nav" aria-label="次のシート"><i class="tri fwd" /></button>
      <button class="sheet-tab">Sheet1</button>
      <button class="plus" aria-label="新しいシート"><svg class="ic16" viewBox="0 0 16 16" v-html="icons.add" /></button>
      <span class="dots">⋮</span>
      <div class="hscroll">
        <button aria-label="左へ"><i class="tri back dark" /></button><span class="hthumb" /><button class="end" aria-label="右へ"><i class="tri fwd dark" /></button>
      </div>
    </section>

    <footer class="status">
      <span class="ready">準備完了</span>
      <button class="view on" aria-label="標準"><svg class="ic14" viewBox="0 0 16 16" v-html="icons.normal" /></button>
      <button class="view" aria-label="ページ レイアウト"><svg class="ic14" viewBox="0 0 16 16" v-html="icons.pageview" /></button>
      <button class="view" aria-label="改ページ"><svg class="ic14" viewBox="0 0 16 16" v-html="icons.breakview" /></button>
      <button class="zb" aria-label="縮小"><svg width="8" height="8" viewBox="0 0 8 8"><path d="M1 4h6" stroke="#555" stroke-width="2" /></svg></button>
      <input v-model="zoom" type="range" min="10" max="190" aria-label="ズーム" />
      <button class="zb" aria-label="拡大"><svg width="8" height="8" viewBox="0 0 8 8"><path d="M0 4h8M4 0v8" stroke="#555" stroke-width="2" /></svg></button>
      <span class="pct">{{ zoom }}%</span>
    </footer>
  </div>
</template>

<style>
body { margin: 0; }
</style>

<style scoped>
.window {
  box-sizing: border-box; height: 100vh; display: flex; flex-direction: column; overflow: hidden;
  border: 1px solid #217346; border-top: 0; background: #e6e6e6; color: #444;
  font-family: "DejaVu Sans", "Noto Sans CJK JP", sans-serif; font-size: 12px; font-feature-settings: "palt";
}
.window * { box-sizing: border-box; }
button, input, select { font: inherit; font-feature-settings: inherit; color: inherit; margin: 0; padding: 0; border: 0; background: none; }
button { display: flex; align-items: center; justify-content: center; flex: none; white-space: nowrap; }
svg { display: block; flex: none; }
.ic12 { width: 12px; height: 12px; }
.ic14 { width: 14px; height: 14px; }
.ic15 { width: 15px; height: 15px; }
.ic16 { width: 16px; height: 16px; }
.ic28 { width: 28px; height: 28px; }
.arr { display: inline-block; flex: none; width: 0; height: 0; border: 3px solid transparent; border-top-color: #777; border-bottom-width: 0; }
.arr.light { border-top-color: #fff; }
.arr.faint { border-top-color: #4b9069; }
.arr.up { border-top-width: 0; border-bottom: 3px solid #666; }

.top { position: relative; flex: none; background: #217346; color: #fff; }
.circuit { position: absolute; right: 0; top: 0; }
.title-row { position: relative; display: flex; align-items: center; height: 33px; }
.quick { flex: 1; display: flex; align-items: center; }
.q-save { width: 15px; margin: 0 12px 0 19px; }
.q-undo { width: 26px; justify-content: space-between; margin-right: 6px; }
.q-touch { width: 26px; justify-content: space-between; margin: 0 14px 0 -4px; }
.lined { position: relative; }
.lined::before { content: ""; position: absolute; left: -3px; top: -6px; width: 5px; height: 1px; background: #fff; }
h1 { margin: 0; font-size: 11px; font-weight: 400; }
.win-controls { flex: 1; display: flex; align-items: center; justify-content: flex-end; height: 29px; }
.win-controls button { width: 42px; }
.account { width: 96px; height: 16px; border: 4px solid #7f7f7f; background: #fff; margin-right: 4px; }
.tabs { position: relative; display: flex; height: 28px; font-size: 11px; }
.tab { padding: 0 14px; }
.tab.narrow { padding: 0 11px; font-size: 10px; }
.tab.on { background: #f1f1f1; color: #217346; }
.tell { gap: 2px; margin-left: 12px; font-size: 10px; }
.share { margin-left: auto; margin-right: 15px; width: 53px; height: 26px; gap: 4px; background: #165c33; }

.ribbon { flex: none; display: flex; height: 86px; padding: 3px 0 1px; background: #f1f1f1; border-bottom: 1px solid #d2d2d2; font-size: 11px; }
.group { flex: none; display: flex; flex-direction: column; justify-content: space-between; border-right: 1px solid #d4d4d4; }
.g-clip { width: 84px; } .g-font { width: 230px; } .g-align { width: 152px; } .g-num { width: 130px; }
.g-style { width: 163px; } .g-cell { width: 69px; } .g-edit { width: 132px; }
.group footer { position: relative; height: 16px; line-height: 16px; text-align: center; color: #666; font-size: 10px; padding-right: 16px; }
.group footer.kanji { font-size: 11px; }
.g-style footer, .g-cell footer, .g-edit footer { padding-right: 0; }
.launch { position: absolute; right: 1px; top: 3px; }
.body { display: flex; height: 63px; }
.big { flex-direction: column; justify-content: flex-start; align-items: center; font-size: 10px; line-height: 14px; padding-top: 3px; }
.big svg { margin-bottom: 4px; }
.big span { display: flex; align-items: center; gap: 4px; }
.big > .arr { margin-top: 3px; }
.w12 { width: 12px; } .w20 { width: 20px; } .w24 { width: 24px; }
.w44 { width: 44px; } .w50 { width: 50px; } .w60 { width: 60px; }
.stack { display: flex; flex-direction: column; height: 63px; }
.stack button { height: 21px; justify-content: flex-start; }
.push { margin-left: 5px; }
.g-edit .stack { width: 36px; padding-left: 5px; }
.stack.text { padding-left: 6px; }
.stack.text button { gap: 3px; }
.stack.text .arr { margin-left: 5px; }
.stack.text .near .arr { margin-left: 0; }
.rows { display: flex; flex-direction: column; gap: 6px; padding: 6px 0 0 3px; }
.row { display: flex; align-items: center; height: 22px; }
.combo { position: relative; display: flex; align-items: center; height: 22px; border: 1px solid #c6c6c6; background: #fff; padding-right: 4px; font-size: 12px; }
.combo select { flex: 1; min-width: 0; appearance: none; padding-left: 2px; }
.c-font { width: 145px; } .c-size { width: 37px; margin-right: 3px; border-left: 0; } .c-num { width: 121px; }
.c-num select { font-size: 11px; }
.letter { font-size: 11px; }
.bold { font-weight: 700; }
.ital { font-family: "Liberation Serif", serif; font-style: italic; font-weight: 700; font-size: 14px; }
.under { font-weight: 700; text-decoration: underline; }
.sep { flex: none; width: 1px; height: 20px; margin: 0 4px; background: #d4d4d4; }
.sep.slim { margin: 0 3px; }
.pressed { height: 22px; background: #c5c5c5; }
.orient { gap: 3px; margin-left: 6px; }
.split { display: flex; }
.tall { width: 1px; height: 50px; margin: 6px 0 0 4px; background: #d4d4d4; }
.wrapcol { padding-left: 4px; }
.collapse { margin-left: auto; align-self: flex-end; margin-right: 6px; }

.formula { flex: none; display: flex; align-items: center; height: 41px; padding: 0 5px; }
.namebox, .fxbox, .fbuttons { display: flex; align-items: center; height: 24px; border: 1px solid #c8c8c8; background: #fff; }
.namebox { width: 93px; padding: 0 5px; }
.namebox input { flex: 1; min-width: 0; font-size: 11px; }
.dots { width: 28px; text-align: center; color: #888; }
.fbuttons { width: 101px; justify-content: space-around; margin-right: 3px; }
.fxbox { flex: 1; }
.fxbox input { flex: 1; min-width: 0; }

.work { flex: 1; min-height: 0; display: flex; }
.sheet { position: relative; flex: 1; min-width: 0; overflow: hidden; background: #fff; border-right: 1px solid #999; color: #222; }
table { table-layout: fixed; width: 1024px; border-collapse: separate; border-spacing: 0; line-height: 1.45; }
.c-no { width: 31px; } .c-std { width: 66px; } .c-wide { width: 67px; }
th, td { padding: 0; }
thead th { height: 18px; line-height: 16px; background: #e6e6e6; border-right: 1px solid #b4b4b4; border-bottom: 1px solid #999; font-weight: 400; color: #444; }
thead .corner svg { margin-left: 18px; }
thead .sel { background: #d2d2d2; color: #217346; border-bottom: 2px solid #217346; line-height: 15px; }
tbody th { background: #e6e6e6; border-right: 1px solid #999; border-bottom: 1px solid #b4b4b4; font-weight: 400; vertical-align: bottom; line-height: 16px; }
td { white-space: pre; vertical-align: middle; overflow: hidden; }
.r-head { height: 69px; } .r-thin { height: 17px; } .r-one { height: 18px; }
.r-four { height: 70px; } .r-six { height: 105px; } .r-five { height: 88px; }
.r-head td { text-align: center; font-weight: 700; color: #111; overflow: visible; }
.r-head .col-K { text-align: left; padding-left: 18px; }
.col-A, .col-C, .col-K, .col-L, .col-M, .col-N, .col-O { padding-left: 2px; }
.r-head .col-M, .r-head .col-N, .r-head .col-O { padding-left: 0; }
.col-D, .col-E, .col-F, .col-G, .col-H, .col-I { text-align: right; padding-right: 3px; }
.r-head .col-D, .r-head .col-E, .r-head .col-F, .r-head .col-G, .r-head .col-H, .r-head .col-I { padding-right: 0; }
td.col-B { vertical-align: top; padding: 5px 0 0; line-height: 0; }
tr:not(.r-head) .col-M, tr:not(.r-head) .col-N { font-size: 11px; line-height: 17px; }
.col-O { font-size: 11px; line-height: 17px; }
a { color: #2a6fb5; text-decoration: underline; }
input[type="checkbox"] { appearance: none; display: block; width: 11px; height: 11px; background: #fff; border: 1px solid #ddd; border-top-color: #888; border-left-color: #888; }
.pasted { position: absolute; left: 31px; top: 18px; }
.pasted input { position: absolute; left: 67px; top: 5px; }

.vscroll { flex: none; display: flex; flex-direction: column; width: 20px; padding: 3px 3px 0; align-items: center; }
.vscroll button { width: 14px; height: 14px; border: 1px solid #bbb; background: #fff; }
.vtrack { flex: 1; width: 14px; background: #dadada; display: flex; flex-direction: column; justify-content: flex-end; padding-bottom: 127px; }
.vthumb { height: 18px; border: 1px solid #aaa; background: #fff; }

.sheetbar { flex: none; display: flex; align-items: center; height: 26px; border-top: 1px solid #999; }
.nav { width: 26px; }
.nav:first-child { margin-left: 14px; }
.tri { width: 0; height: 0; border: 4px solid transparent; }
.tri.back { border-right-color: #bbb; border-left-width: 0; }
.tri.fwd { border-left-color: #bbb; border-right-width: 0; }
.tri.dark.back { border-right-color: #555; }
.tri.dark.fwd { border-left-color: #555; }
.sheet-tab { align-self: flex-start; width: 67px; height: 22px; margin: -1px 29px 0 26px; padding-top: 3px; background: #fff; color: #217346; border: 1px solid #999; border-top: 0; border-bottom: 2px solid #217346; }
.sheetbar .dots { margin-left: auto; }
.hscroll { flex: 0 1 374px; display: flex; height: 14px; margin-right: 20px; background: #dadada; }
.hscroll button { width: 14px; border: 1px solid #aaa; background: #fff; }
.hthumb { width: 48px; border: 1px solid #aaa; border-left: 0; background: #fff; }
.end { margin-left: auto; }

.status { flex: none; display: flex; align-items: center; height: 20px; border-top: 1px solid #cfcfcf; background: #f1f1f1; font-size: 11px; }
.ready { flex: 1; padding-left: 6px; }
.view { width: 35px; height: 19px; }
.view.on { background: #c8c8c8; }
.zb { width: 12px; margin-left: 2px; }
.status input { appearance: none; width: 92px; height: 12px; margin: 0 0 0 1px; background: linear-gradient(#888, #888) center / 100% 1px no-repeat; }
.status input::-webkit-slider-thumb { appearance: none; width: 4px; height: 11px; background: #555; }
.pct { width: 59px; padding-left: 10px; }
</style>
